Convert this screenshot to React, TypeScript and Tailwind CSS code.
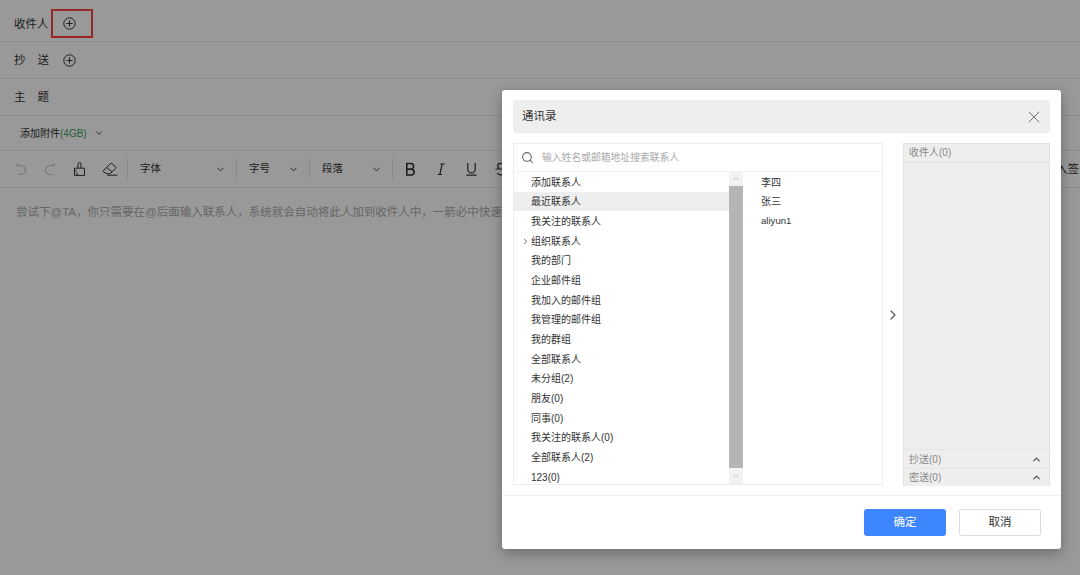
import React from "react";
import { Search, X, ChevronDown, ChevronUp, ChevronRight } from "lucide-react";

const groups = ["添加联系人","最近联系人","我关注的联系人","组织联系人","我的部门","企业邮件组","我加入的邮件组","我管理的邮件组","我的群组","全部联系人","未分组(2)","朋友(0)","同事(0)","我关注的联系人(0)","全部联系人(2)","123(0)"];
const font = { fontFamily: '"Liberation Sans","Noto Sans CJK SC",sans-serif' };

function Plus() {
  return (
    <svg width="13" height="13" viewBox="0 0 13 13" fill="none" stroke="#333" strokeWidth="1">
      <circle cx="6.5" cy="6.5" r="5.7" />
      <path d="M6.5 3.4v6.2M3.4 6.5h6.2" />
    </svg>
  );
}

function Sel({ label, w }: { label: string; w: string }) {
  return (
    <div className={`flex items-center justify-between pl-[12px] pr-[2px] border-r border-[#e6e6e6] h-[20px] ${w}`}>
      <span className="text-[10.5px]">{label}</span>
      <ChevronDown size={11} className="mr-[8px]" />
    </div>
  );
}

function Ico({ w, className, children, sw = 1.2, color = "#333" }: { w: number; className?: string; children: React.ReactNode; sw?: number; color?: string }) {
  return (
    <svg width={w} height="14" viewBox={`0 0 ${w} 14`} fill="none" stroke={color} strokeWidth={sw} className={className}>
      {children}
    </svg>
  );
}

export default function App() {
  return (
    <div style={font} className="relative w-[1080px] h-[575px] overflow-hidden bg-white text-[#333]">
      <div className="flex flex-col">
        <div className="h-[42px] border-b border-[#e8e8e8] flex items-center pl-[14px] pt-[5px] text-[11.5px] gap-[14px] relative">
          <span className="mt-[3px]">收件人</span><Plus />
          <div className="absolute left-[51px] top-[9px] w-[42px] h-[29px] border-2 border-[#ff4040]" />
        </div>
        <div className="h-[37px] border-b border-[#e8e8e8] flex items-center pl-[14px] text-[11.5px]">
          <span className="w-[49px] flex justify-between pr-[14px] mt-[2px]"><span>抄</span><span>送</span></span><Plus />
        </div>
        <div className="h-[37px] border-b border-[#e8e8e8] flex items-center pl-[14px] text-[11.5px]">
          <span className="w-[35px] flex justify-between mt-[2px]"><span>主</span><span>题</span></span>
        </div>
        <div className="h-[35px] border-b border-[#e8e8e8] flex items-center pl-[20px] text-[10px] gap-[7px]">
          <span>添加附件<span className="text-[#3f9a58]">(4GB)</span></span><ChevronDown size={10} />
        </div>
        <div className="h-[37px] border-b border-[#e8e8e8] flex items-center pl-[15px] relative">
          <Ico w={12} color="#c4c4c4"><path d="M2 3.5 L2 1.5 M1.5 3.5 H5 C9 3.5 10.5 6 10.5 8 C10.5 10.5 8.5 12.5 5.5 12.5 H3" /></Ico>
          <Ico w={12} color="#c4c4c4" className="ml-[17px]"><path d="M10 3.5 L10 1.5 M10.5 3.5 H7 C3 3.5 1.5 6 1.5 8 C1.5 10.5 3.5 12.5 6.5 12.5 H9" /></Ico>
          <Ico w={13} sw={1} className="ml-[17px]"><path d="M5 6V2a1.5 1.5 0 0 1 3 0v4M1.5 6.2h10v7.2h-10zM4 13.3v-2.8M1.5 8.8h2" /></Ico>
          <Ico w={16} sw={1} className="ml-[16px]"><path d="M1.5 8.5 8.3 1.8a1.2 1.2 0 0 1 1.7 0l3.6 3a1.2 1.2 0 0 1 0 1.8L8 11.8H5L1.5 9.8a1 1 0 0 1 0-1.3zM4.5 5.5l5.5 4.2M5 13.2h10.5" /></Ico>
          <div className="h-[20px] border-l border-[#e6e6e6] ml-[9px]" />
          <Sel label="字体" w="w-[109px]" />
          <Sel label="字号" w="w-[73px]" />
          <Sel label="段落" w="w-[83px]" />
          <Ico w={11} sw={1.6} className="ml-[12px]"><path d="M1.8 1.5h4a2.8 2.8 0 0 1 0 5.6h-4zM1.8 7.1h4.8a3 3 0 0 1 0 5.9H1.8z" /></Ico>
          <Ico w={8} className="ml-[21px]"><path d="M5.2 2 2.8 12.5M3.2 2h4.4M.6 12.5h4.4" /></Ico>
          <Ico w={11} className="ml-[21px]"><path d="M1.8 1v6.2a3.7 3.7 0 0 0 7.4 0V1M.5 13.2h10" /></Ico>
          <Ico w={12} className="ml-[18px]"><path d="M9.5 3.2C8.8 1.8 7.5 1.3 6 1.3c-2 0-3.4 1-3.4 2.7 0 1 .6 1.8 1.8 2.4M.5 7h11M8.6 8.4c.6.5.9 1.1.9 1.9 0 1.7-1.4 2.6-3.4 2.6-1.6 0-3-.6-3.7-2" /></Ico>
          <span className="absolute left-[1056px] top-[10px] text-[11.5px] whitespace-nowrap">入签名</span>
        </div>
        <div className="pl-[16px] pt-[16px] text-[11.5px] text-[#aaa] whitespace-nowrap">尝试下@TA，你只需要在@后面输入联系人，系统就会自动将此人加到收件人中，一箭必中快速传达</div>
      </div>

      <div className="absolute inset-0 bg-black/40" />

      <div className="absolute left-[502px] top-[90px] w-[559px] h-[459px] bg-white rounded-[3px] shadow-[0_4px_14px_rgba(0,0,0,0.3)] flex flex-col">
        <div className="flex-1 flex flex-col px-[11px] pt-[10px]">
          <div className="h-[33px] bg-[#eeeeee] rounded-[3px] flex items-center justify-between pl-[9px] pr-[6px]">
            <span className="text-[11.5px] text-[#333]">通讯录</span>
            <X size={20} strokeWidth={1} className="text-[#555a66]" />
          </div>
          <div className="flex mt-[10px] h-[343px]">
            <div className="w-[370px] h-[342px] border border-[#eeeeee] flex flex-col">
              <div className="h-[28px] shrink-0 border-b border-[#f2f2f2] flex items-center pl-[7px] gap-[8px]">
                <Search size={13} className="text-[#666]" />
                <span className="text-[9.8px] text-[#aaa] mt-[1px]">输入姓名或邮箱地址搜索联系人</span>
              </div>
              <div className="flex flex-1 min-h-0">
                <div className="w-[215px] overflow-hidden">
                  {groups.map((g, i) => (
                    <div key={i} className={`h-[19.67px] flex items-center pl-[17px] pt-[1px] text-[10px] text-[#333] relative ${i === 1 ? "bg-[#eeeeee]" : ""}`}>
                      {i === 3 && <ChevronRight size={9} strokeWidth={2} className="absolute left-[7px] top-[6px]" />}
                      {g}
                    </div>
                  ))}
                </div>
                <div className="w-[14px] bg-[#f2f2f2] flex flex-col items-center justify-between">
                  <div className="h-[14px] flex items-center"><ChevronUp size={10} className="text-[#bbb]" /></div>
                  <div className="flex-1 w-full bg-[#b5b5b5]" />
                  <div className="h-[16px] flex items-center"><ChevronDown size={10} className="text-[#bbb]" /></div>
                </div>
                <div className="flex-1 pl-[18px] text-[10px] text-[#333]">
                  <div className="h-[19.67px] flex items-center pt-[1px]">李四</div>
                  <div className="h-[19.67px] flex items-center pt-[1px]">张三</div>
                  <div className="h-[19.67px] flex items-center pt-[1px] text-[9.6px]">aliyun1</div>
                </div>
              </div>
            </div>
            <div className="w-[20px] flex items-center justify-center">
              <ChevronRight size={16} strokeWidth={1.8} className="text-[#555]" />
            </div>
            <div className="w-[147px] bg-[#eeeeee] border-x border-t border-[#e2e2e2] flex flex-col text-[10px] text-[#888]">
              <div className="h-[19px] border-b-2 border-[#e6e6e6] flex items-center pl-[5px]">收件人(0)</div>
              <div className="flex-1" />
              <div className="h-[19px] border-t border-[#e6e6e6] flex items-center justify-between pl-[5px] pr-[7px]"><span>抄送(0)</span><ChevronUp size={11} strokeWidth={2.2} className="text-[#444]" /></div>
              <div className="h-[18px] border-t border-[#e6e6e6] flex items-center justify-between pl-[5px] pr-[7px]"><span>密送(0)</span><ChevronUp size={11} strokeWidth={2.2} className="text-[#444]" /></div>
            </div>
          </div>
        </div>
        <div className="h-[54px] shrink-0 border-t border-[#f2f2f2] flex items-center justify-end gap-[13px] pr-[20px]">
          <button className="w-[82px] h-[27px] rounded-[3px] bg-[#3d86ff] text-white text-[11.5px]">确定</button>
          <button className="w-[82px] h-[27px] rounded-[3px] bg-white border border-[#dcdcdc] text-[#333] text-[11.5px]">取消</button>
        </div>
      </div>
    </div>
  );
}
